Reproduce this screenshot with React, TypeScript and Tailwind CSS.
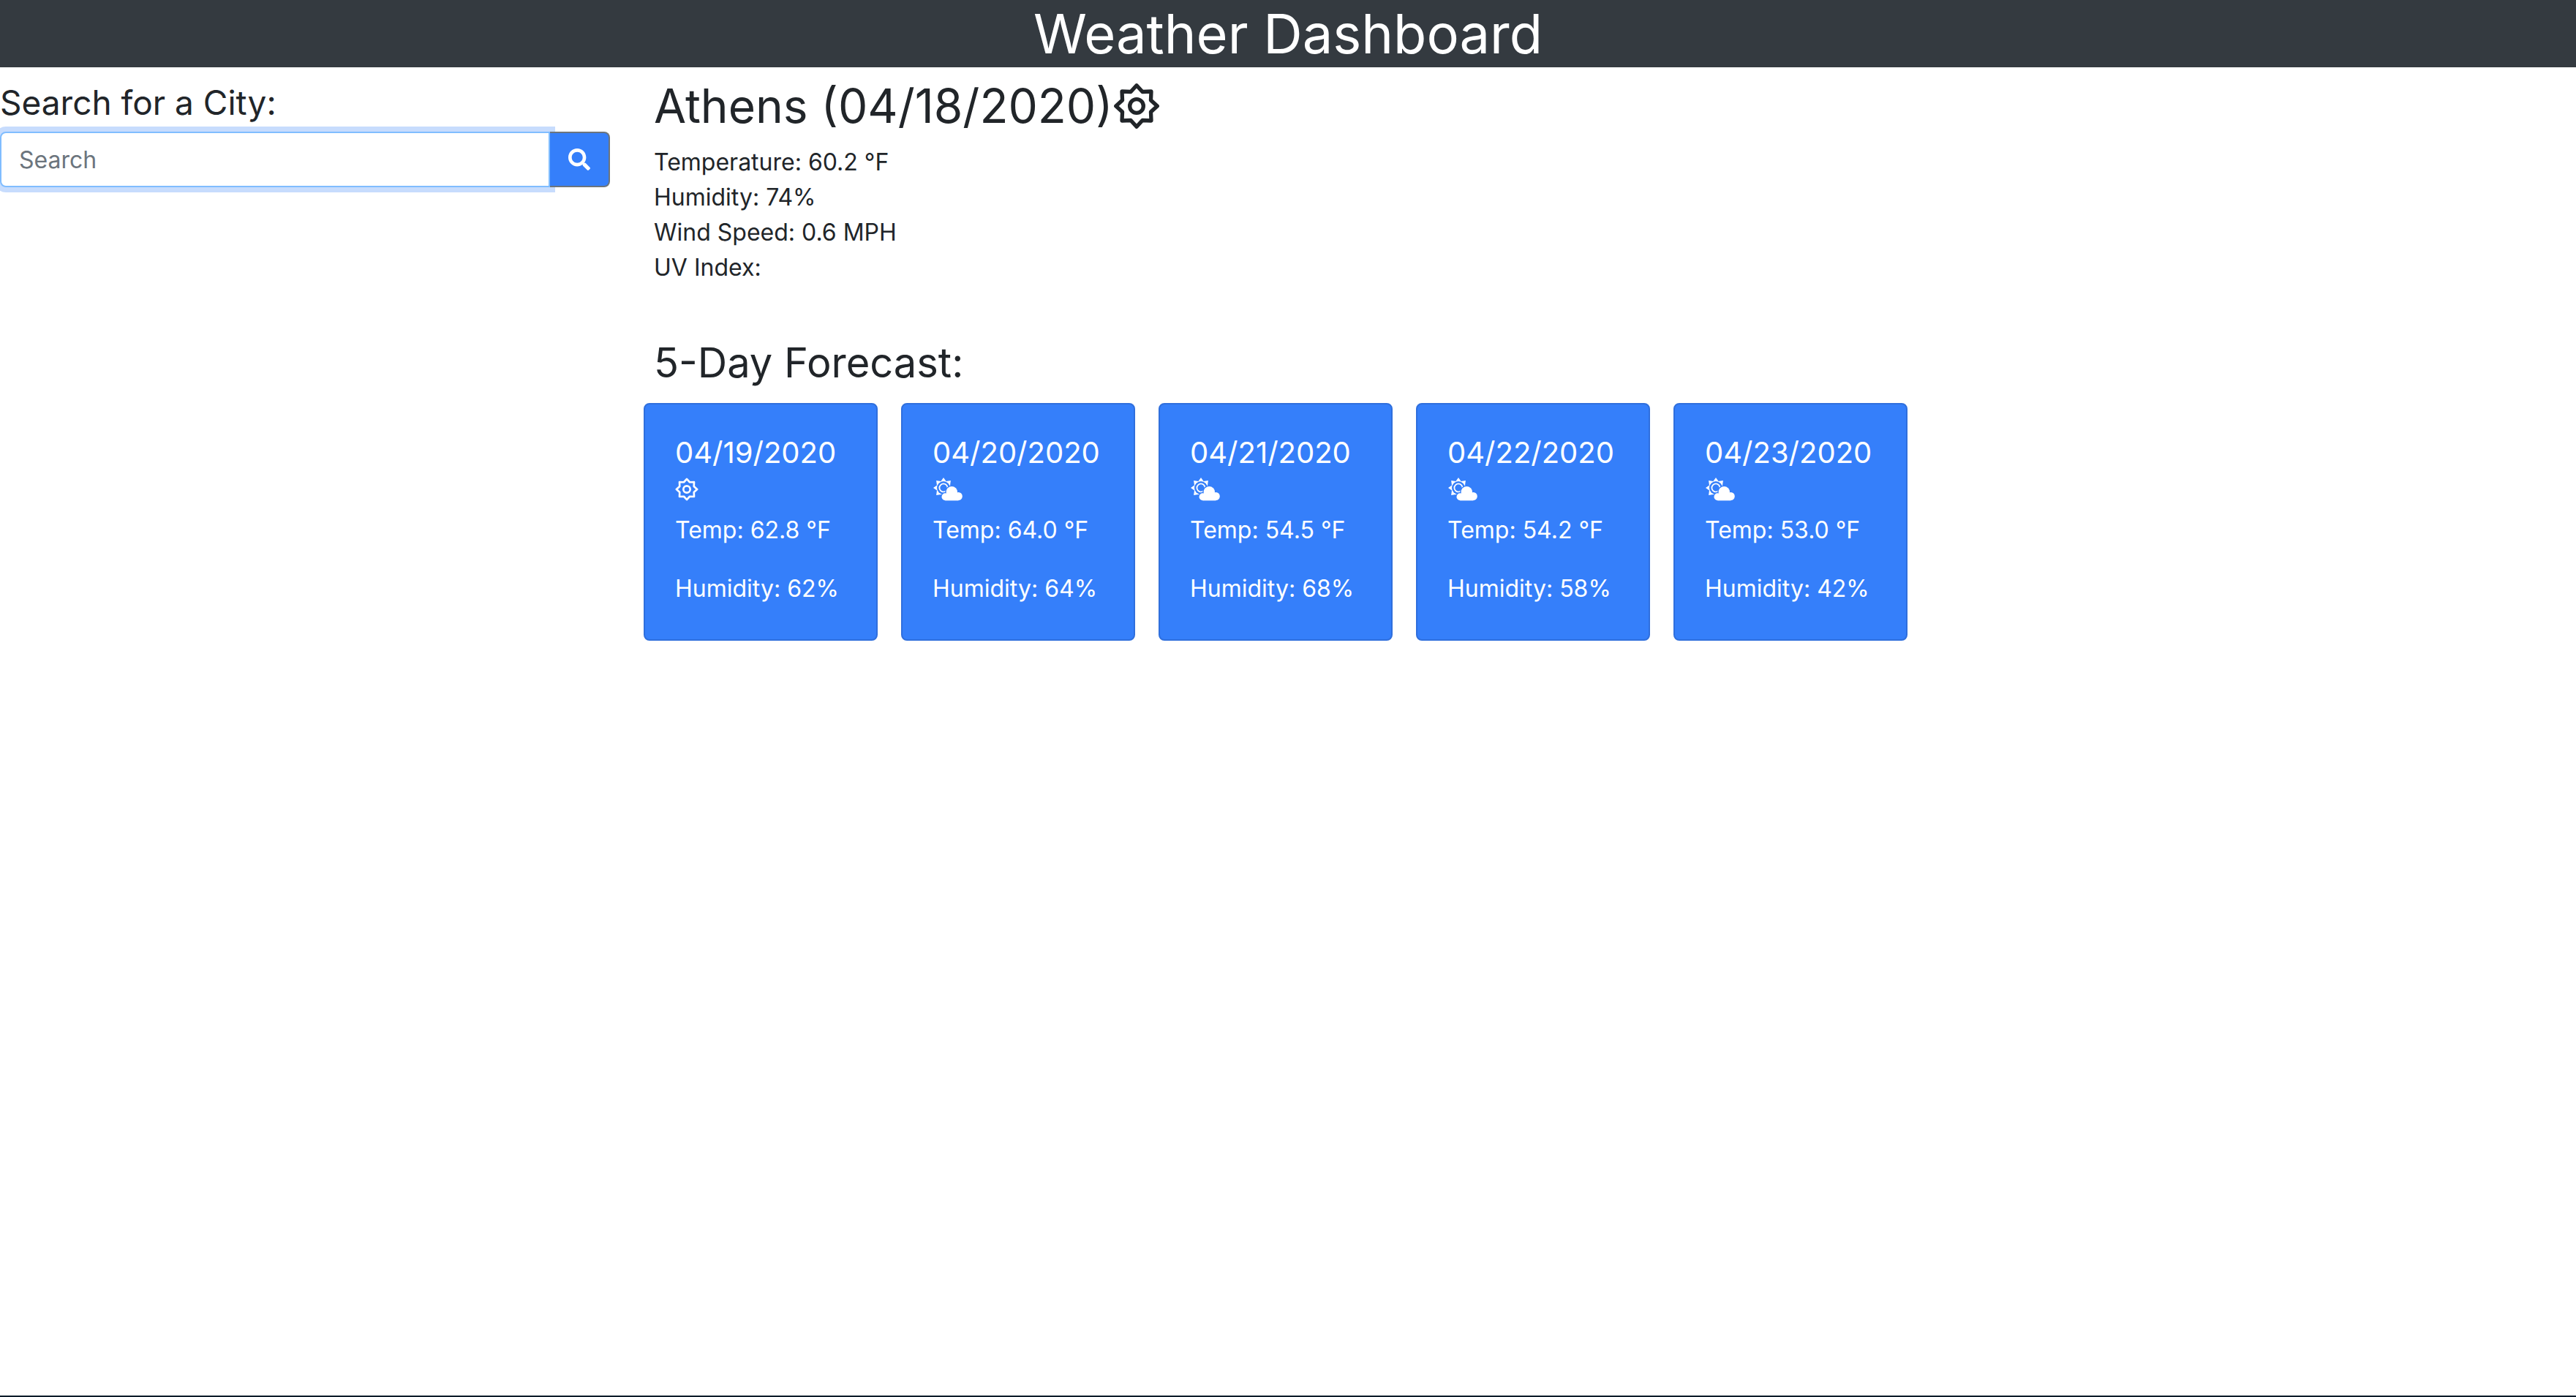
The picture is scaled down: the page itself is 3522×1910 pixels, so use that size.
import { FaSearch } from "react-icons/fa";

const forecast = [
  { date: "04/19/2020", icon: "sun", temp: "62.8", humidity: "62" },
  { date: "04/20/2020", icon: "cloud", temp: "64.0", humidity: "64" },
  { date: "04/21/2020", icon: "cloud", temp: "54.5", humidity: "68" },
  { date: "04/22/2020", icon: "cloud", temp: "54.2", humidity: "58" },
  { date: "04/23/2020", icon: "cloud", temp: "53.0", humidity: "42" },
];

const StarPoints =
  "12,1.4 15,4.7 19.5,4.5 19.3,9 22.6,12 19.3,15 19.5,19.5 15,19.3 12,22.6 9,19.3 4.5,19.5 4.7,15 1.4,12 4.7,9 4.5,4.5 9,4.7";

const SunIcon = ({ className }: { className: string }) => (
  <svg viewBox="0 0 24 24" fill="none" stroke="currentColor" strokeWidth="2" strokeLinejoin="round" className={className}>
    <polygon points={StarPoints} />
    <circle cx="12" cy="12" r="3.5" />
  </svg>
);

const CloudSunIcon = () => (
  <svg viewBox="0 0 41 32" className="block w-[41px] h-8">
    <polygon
      fill="#ffffff"
      points="15,0 18.6,5 24.9,4.1 24,10.4 29,14 24,17.6 24.9,23.9 18.6,23 15,28 11.4,23 5.1,23.9 6,17.6 1,14 6,10.4 5.1,4.1 11.4,5"
    />
    <circle cx="15" cy="14" r="9" fill="#357ffa" />
    <circle cx="15" cy="14" r="5.6" fill="none" stroke="#ffffff" strokeWidth="1.8" />
    <g fill="#357ffa" stroke="#357ffa" strokeWidth="3">
      <circle cx="26.3" cy="19.7" r="7.7" />
      <circle cx="35.3" cy="25" r="5.5" />
      <circle cx="17.5" cy="26.3" r="5" />
    </g>
    <g fill="#ffffff">
      <circle cx="26.3" cy="19.7" r="7.7" />
      <circle cx="35.3" cy="25.5" r="5.5" />
      <circle cx="17.5" cy="26.3" r="5" />
      <rect x="17.5" y="24" width="18" height="7.4" />
    </g>
  </svg>
);

export default function App() {
  return (
    <div className="h-screen flex flex-col bg-white text-[#212529] border-b-2 border-[#0b1c2a] font-['Inter',sans-serif] overflow-hidden">
      <header className="h-[92px] shrink-0 bg-[#343a40] text-white text-center text-[74px] leading-[92px]">
        Weather Dashboard
      </header>

      <div className="flex">
        {/* Search */}
        <aside className="w-[834px] shrink-0 pt-[20px]">
          <h2 className="text-[46px] leading-[56px]">Search for a City:</h2>
          <div className="flex mt-[12px]">
            <input
              placeholder="Search"
              className="w-[752px] h-[76px] px-6 text-[32px] bg-white rounded-l-lg border-2 border-[#80bdff] shadow-[0_0_0_7px_#c7dcfd] outline-none placeholder:text-[#6c757d]"
            />
            <button className="relative w-[82px] h-[76px] flex items-center justify-center bg-[#357ffa] text-white rounded-r-lg border-2 border-l-0 border-[#6c757d]">
              <FaSearch size={30} />
            </button>
          </div>
        </aside>

        {/* Weather */}
        <main className="pl-[60px] pt-[20px]">
          <div className="flex items-center h-[66px]">
            <h1 className="text-[64px] leading-[66px]">Athens (04/18/2020)</h1>
            <SunIcon className="w-16 h-16" />
          </div>
          <div className="mt-[20px] text-[32px] leading-[48px]">
            <p>Temperature: 60.2 °F</p>
            <p>Humidity: 74%</p>
            <p>Wind Speed: 0.6 MPH</p>
            <p>UV Index:</p>
          </div>

          <h2 className="mt-[72px] text-[56px] leading-[68px]">5-Day Forecast:</h2>
          <div className="flex gap-8 mt-[21px] -ml-[14px]">
            {forecast.map((day) => (
              <div
                key={day.date}
                className="w-[320px] h-[325px] pt-[44px] pl-[41px] bg-[#357ffa] border-2 border-[#2f6fdd] rounded-lg text-white"
              >
                <div className="text-[40px] leading-[44px]">{day.date}</div>
                <div className="h-8 mt-[12px]">
                  {day.icon === "sun" ? <SunIcon className="block w-8 h-8" /> : <CloudSunIcon />}
                </div>
                <p className="mt-[16px] text-[32px] leading-[48px]">Temp: {day.temp} °F</p>
                <p className="mt-[32px] text-[32px] leading-[48px]">Humidity: {day.humidity}%</p>
              </div>
            ))}
          </div>
        </main>
      </div>
    </div>
  );
}
